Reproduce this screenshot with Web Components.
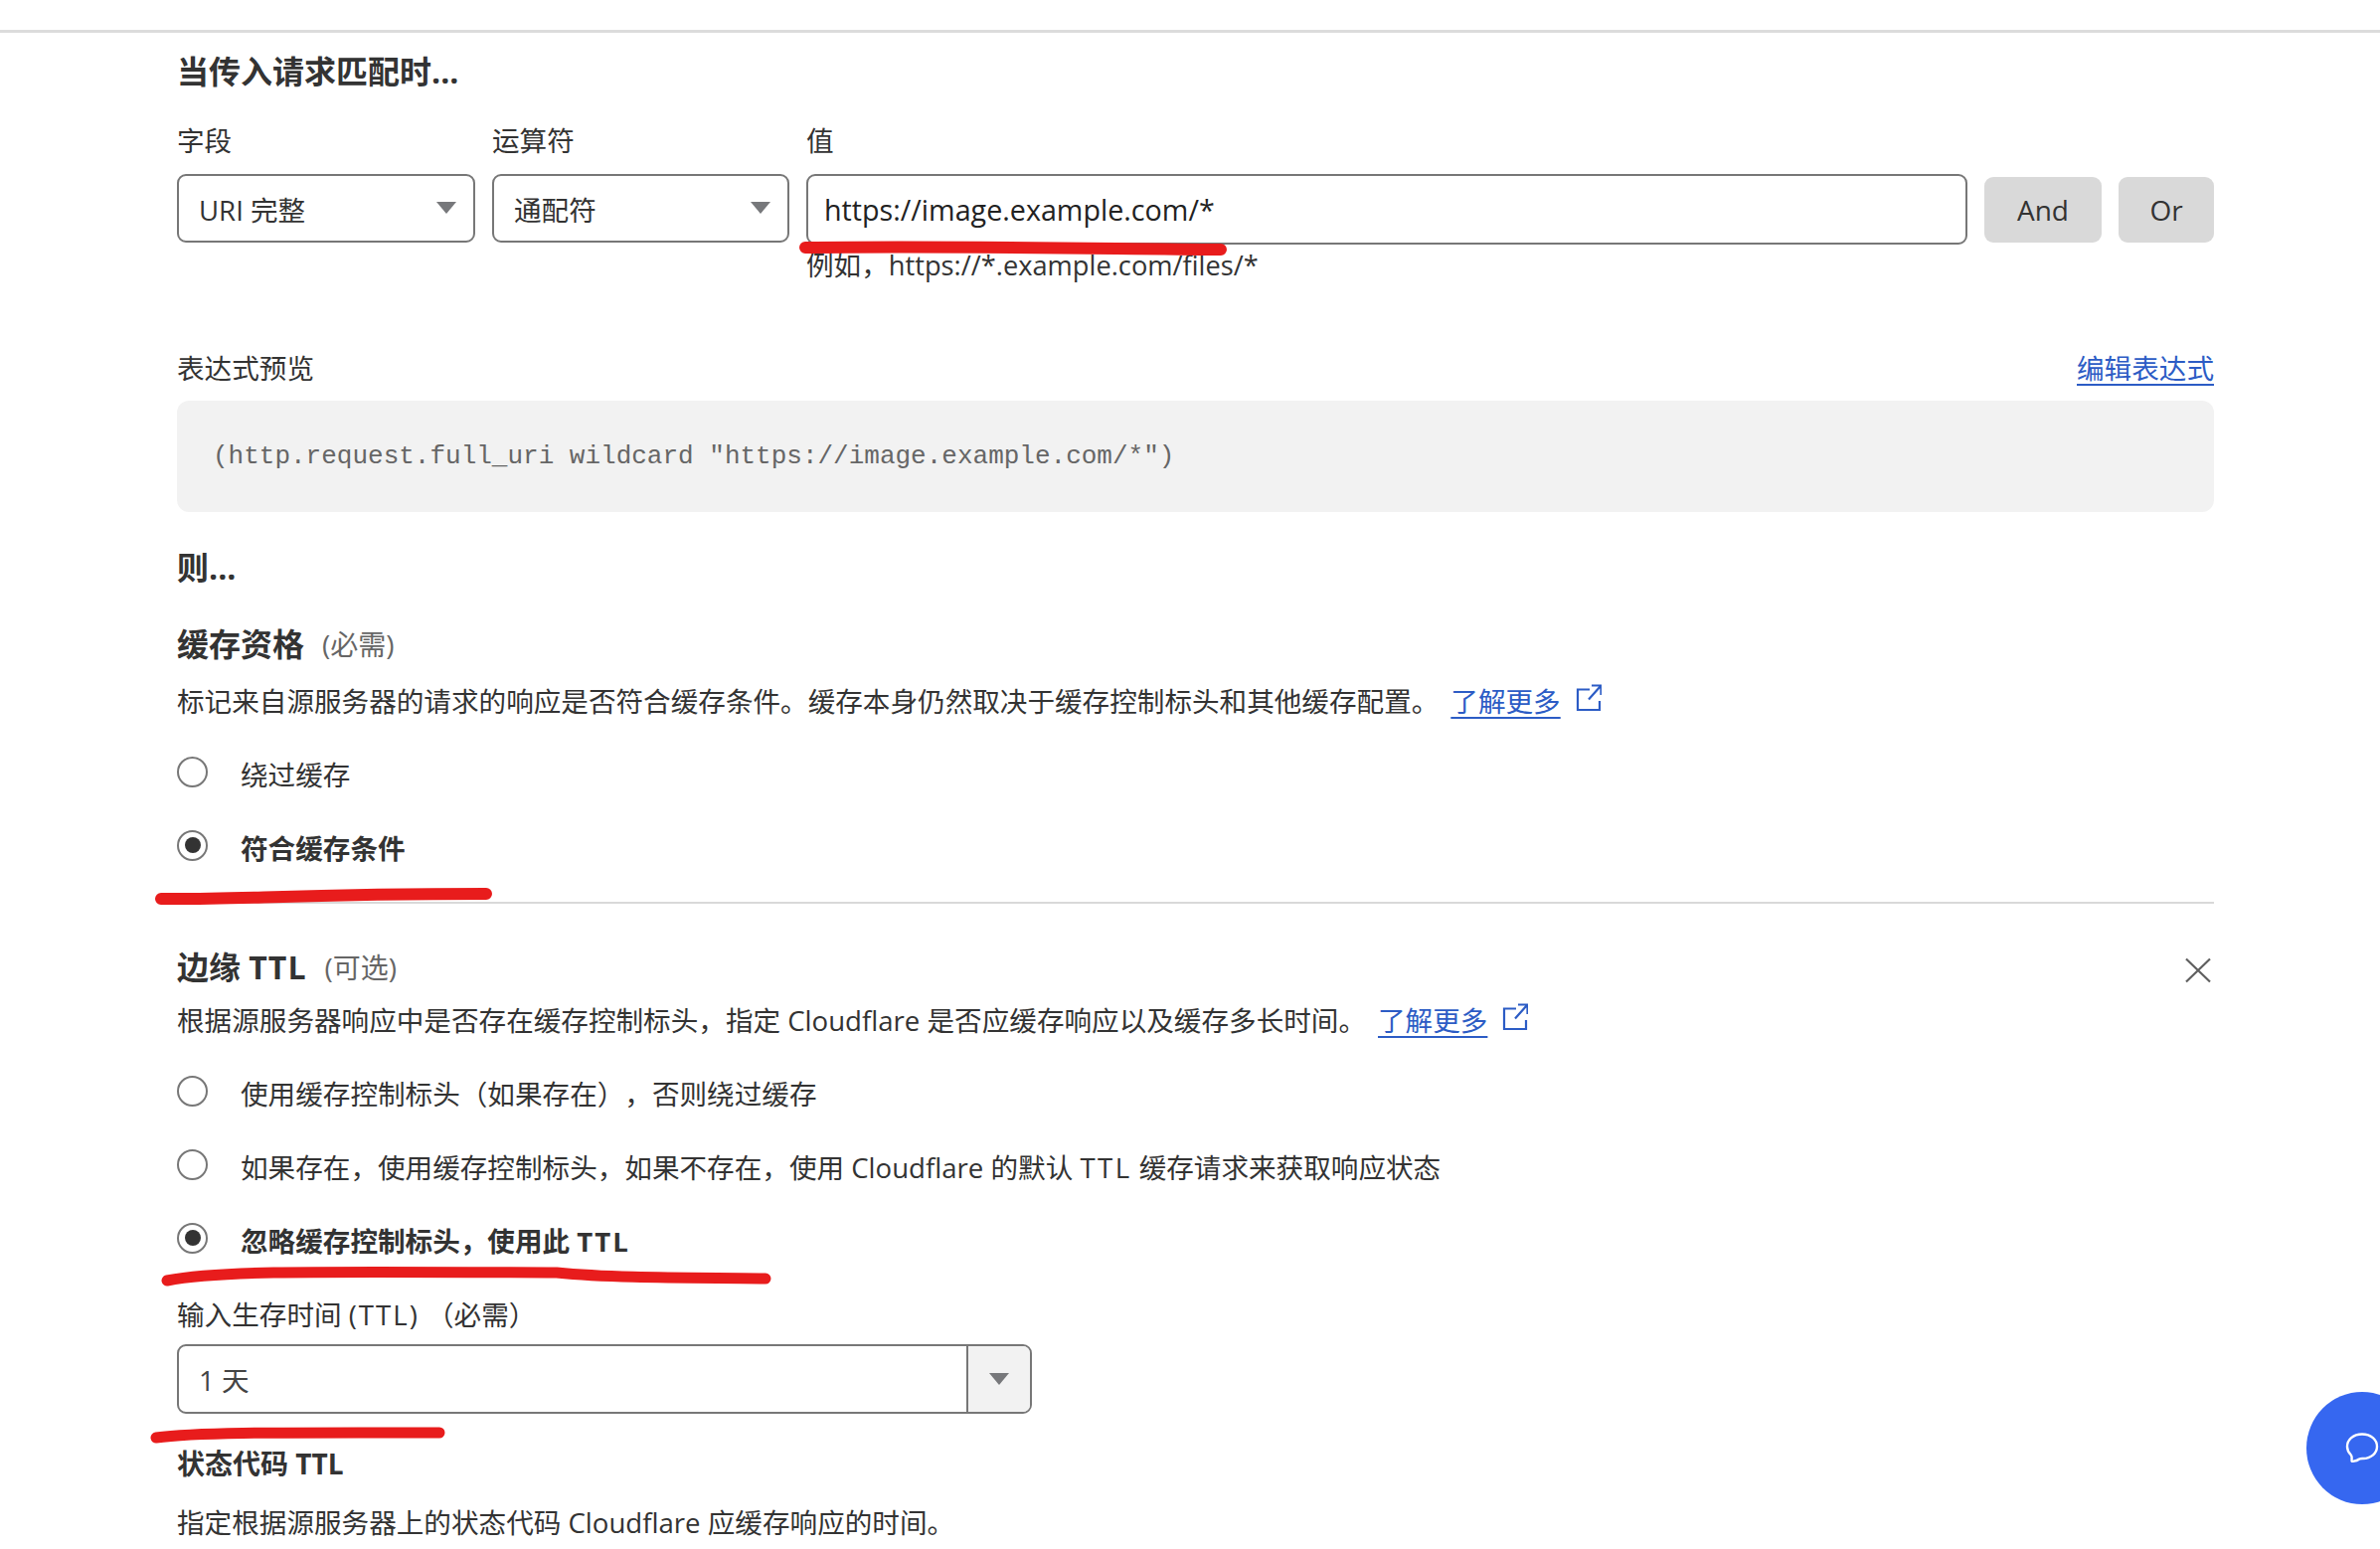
<!DOCTYPE html>
<html lang="zh">
<head>
<meta charset="utf-8">
<title>缓存规则</title>
<style>
    html, body { margin: 0; height: 1558px; overflow: hidden; background: #fff; }
    body { font-family: "Open Sans", "Noto Sans CJK SC", sans-serif; font-size: 27.6px; color: #333; text-spacing-trim: space-all; }
</style>
</head>
<body>
<rule-page>
    <section-title level="1" style="margin-top:17px">当传入请求匹配时...</section-title>

    <match-row style="margin-top:27px"></match-row>

    <expression-preview style="margin-top:65px" link="编辑表达式">(http.request.full_uri wildcard "https://image.example.com/*")</expression-preview>

    <section-title level="1" style="margin-top:34px">则...</section-title>

    <section-title style="margin-top:33px" note="(必需)">缓存资格</section-title>
    <help-text style="margin-top:15px" link="了解更多">标记来自源服务器的请求的响应是否符合缓存条件。缓存本身仍然取决于缓存控制标头和其他缓存配置。</help-text>
    <radio-group style="margin-top:16px">
        <radio-option>绕过缓存</radio-option>
        <radio-option checked>符合缓存条件</radio-option>
    </radio-group>

    <rule-divider style="margin-top:18px"></rule-divider>

    <section-title style="margin-top:42px" note="(可选)" closable>边缘 <span style="letter-spacing:1px">TTL</span></section-title>
    <help-text style="margin-top:11px" link="了解更多">根据源服务器响应中是否存在缓存控制标头，指定 Cloudflare 是否应缓存响应以及缓存多长时间。</help-text>
    <radio-group style="margin-top:16px">
        <radio-option>使用缓存控制标头（如果存在），否则绕过缓存</radio-option>
        <radio-option>如果存在，使用缓存控制标头，如果不存在，使用 Cloudflare 的默认 <span style="letter-spacing:2.400px">TTL</span> 缓存请求来获取响应状态</radio-option>
        <radio-option checked>忽略缓存控制标头，使用此 <span style="letter-spacing:2px">TTL</span></radio-option>
    </radio-group>

    <help-text style="margin-top:18px">输入生存时间 <span style="letter-spacing:2px">(TTL)</span> （必需）</help-text>
    <ttl-combo style="margin-top:10px">1 天</ttl-combo>

    <section-title level="3" style="margin-top:30px">状态代码 TTL</section-title>
    <help-text style="margin-top:19px">指定根据源服务器上的状态代码 Cloudflare 应缓存响应的时间。</help-text>
</rule-page>
<ink-marks></ink-marks>
<chat-fab></chat-fab>

<script>
// small base class, every element just sets its shadow html once
class ShadowEl extends HTMLElement {
    constructor() {
        super();
        this.attachShadow({ mode: 'open' });
    }
    connectedCallback() {
        this.shadowRoot.innerHTML = this.render();
    }
}

const ARROW = `<svg width="20" height="12" viewBox="0 0 20 12"><path d="M0 0h20L10 12z" fill="#77787b"/></svg>`;

class RulePage extends ShadowEl {
    render() {
        return `
            <style>
                :host { display: block; }
                .top { height: 30px; border-bottom: 3px solid #dcdcdc; }
                .body { padding: 0 167px 0 178px; display: flex; flex-direction: column; }
            </style>
            <div class="top"></div>
            <div class="body"><slot></slot></div>
        `;
    }
}

class SectionTitle extends ShadowEl {
    render() {
        const level = this.getAttribute('level');
        const size = level === '3' ? 28 : 32;
        const note = this.getAttribute('note');
        const close = this.hasAttribute('closable') ? `
            <svg class="close" width="26" height="26" viewBox="0 0 26 26">
                <path d="M1 1.500 25 24.500M25 1.500 1 24.500" stroke="#5f5f5f" stroke-width="2.200" fill="none"/>
            </svg>` : '';
        return `
            <style>
                :host { display: flex; align-items: center; line-height: ${level === '3' ? 40 : 44}px; }
                h3 { margin: 0; font-size: ${size}px; font-weight: 700; }
                .note { margin-left: 18px; font-size: 28px; color: #666; }
                .close { margin-left: auto; margin-right: 3px; margin-top: 6px; }
            </style>
            <h3><slot></slot></h3>
            ${note ? `<span class="note">${note}</span>` : ''}
            ${close}
        `;
    }
}

class SelectBox extends ShadowEl {
    render() {
        return `
            <style>
                :host { display: flex; align-items: center; justify-content: space-between; box-sizing: border-box;
                    height: 69px; padding: 0 17px 0 20px; border: 2px solid #777; border-radius: 9px; }
                svg { margin-top: -2px; }
            </style>
            <span><slot></slot></span>
            ${ARROW}
        `;
    }
}

class MatchRow extends ShadowEl {
    render() {
        return `
            <style>
                :host { display: grid; grid-template-columns: 300px 299px 1168px 118px 96px; column-gap: 17px; }
                .label { line-height: 40px; margin-bottom: 14px; }
                .input { box-sizing: border-box; height: 71px; padding: 0 16px; display: flex; align-items: center;
                    border: 2px solid #777; border-radius: 9px; color: #222; font-size: 28.700px; }
                .hint { grid-column: 3; margin-top: 2px; line-height: 36px; }
                .hint span { font-size: 27.260px; }
                .btn { height: 66px; align-self: start; margin-top: 3px; display: flex; align-items: center; justify-content: center;
                    background: #d9d9d9; border-radius: 9px; font-size: 28px; }
            </style>
            <div class="label">字段</div>
            <div class="label">运算符</div>
            <div class="label">值</div>
            <div></div><div></div>
            <select-box>URI 完整</select-box>
            <select-box>通配符</select-box>
            <div class="input">https://image.example.com/*</div>
            <div class="btn">And</div>
            <div class="btn">Or</div>
            <div class="hint">例如，<span>https://*.example.com/files/*</span></div>
        `;
    }
}

class ExpressionPreview extends ShadowEl {
    render() {
        return `
            <style>
                :host { display: block; }
                .head { display: flex; justify-content: space-between; line-height: 40px; margin-bottom: 13px; }
                a { color: #2c5cc5; text-decoration: underline; text-underline-offset: 5px; text-decoration-thickness: 2px; }
                .box { height: 112px; box-sizing: border-box; padding: 0 36px; display: flex; align-items: center;
                    background: #f2f2f2; border-radius: 12px; color: #666;
                    font-family: "Liberation Mono", monospace; font-size: 26px; }
            </style>
            <div class="head"><span>表达式预览</span><a>${this.getAttribute('link')}</a></div>
            <div class="box"><slot></slot></div>
        `;
    }
}

class HelpText extends ShadowEl {
    render() {
        const link = this.getAttribute('link');
        return `
            <style>
                :host { display: block; line-height: 40px; }
                a { margin-left: 12px; color: #2c5cc5; text-decoration: underline; text-underline-offset: 5px; text-decoration-thickness: 2px; }
                svg { margin-left: 15px; vertical-align: 1px; }
            </style>
            <slot></slot>${link ? `<a>${link}</a><svg width="26" height="27" viewBox="0 0 26 27" fill="none" stroke="#2c5cc5" stroke-width="2.200">
                <path d="M14 5.500H2V26H24V17"/>
                <path d="M13 15.500 25 2M16 1.500h9.500V11"/>
            </svg>` : ''}
        `;
    }
}

class RadioGroup extends ShadowEl {
    render() {
        return `<style>:host { display: block; }</style><slot></slot>`;
    }
}

class RadioOption extends ShadowEl {
    render() {
        const on = this.hasAttribute('checked');
        return `
            <style>
                :host { display: flex; align-items: center; height: 74px; font-weight: ${on ? 700 : 400}; }
                .dot { box-sizing: border-box; width: 31px; height: 31px; margin: -4px 33px 0 0; flex: none;
                    border: 2px solid #777; border-radius: 50%; display: flex; align-items: center; justify-content: center; }
                .dot i { width: 16px; height: 16px; border-radius: 50%; background: #333; }
            </style>
            <span class="dot">${on ? '<i></i>' : ''}</span>
            <span><slot></slot></span>
        `;
    }
}

class RuleDivider extends ShadowEl {
    render() {
        return `<style>:host { display: block; height: 2px; background: #d9d9d9; }</style>`;
    }
}

class TtlCombo extends ShadowEl {
    render() {
        return `
            <style>
                :host { display: flex; box-sizing: border-box; width: 860px; height: 70px; border: 2px solid #777; border-radius: 9px; overflow: hidden; }
                .val { flex: 1; padding-left: 20px; display: flex; align-items: center; color: #444; }
                .btn { width: 62px; display: flex; align-items: center; justify-content: center; background: #f2f2f2; border-left: 2px solid #777; }
            </style>
            <div class="val"><slot></slot></div>
            <div class="btn">${ARROW}</div>
        `;
    }
}

// red pen marks somebody drew on top of the screenshot
class InkMarks extends ShadowEl {
    render() {
        return `
            <style>
                :host { position: absolute; left: 0; top: 0; width: 2394px; height: 1558px; pointer-events: none; }
                path { fill: none; stroke: #e81c1c; stroke-linecap: round; }
            </style>
            <svg width="2394" height="1558">
                <path stroke-width="12" d="M810 249C950 247 1100 250 1228 251"/>
                <path stroke-width="12" d="M162 904C240 905 300 899 489 899"/>
                <path stroke-width="11" d="M168 1288C220 1278 300 1279 560 1280C620 1286 700 1285 770 1286"/>
                <path stroke-width="11" d="M157 1446C200 1440 300 1441 442 1441"/>
            </svg>
        `;
    }
}

class ChatFab extends ShadowEl {
    render() {
        return `
            <style>
                :host { position: fixed; left: 2320px; top: 1400px; width: 112px; height: 113px; border-radius: 50%;
                    background: #3667f0; display: flex; align-items: center; justify-content: center; }
            </style>
            <svg width="34" height="32" viewBox="0 0 34 32" fill="none" stroke="#fff" stroke-width="2.400">
                <path d="M17 1.500C8 1.500 2 7 2 14c0 3.500 1.500 6 3.500 8 1 1 1.500 2 1 5.500-.2 1 .3 1.500 1.200 1.400 3-.3 5-1 6.500-2.400 1-.6 2-.5 3.800-.5C25.500 26 32 21 32 14S26 1.500 17 1.500z"/>
            </svg>
        `;
    }
}

customElements.define('rule-page', RulePage);
customElements.define('section-title', SectionTitle);
customElements.define('select-box', SelectBox);
customElements.define('match-row', MatchRow);
customElements.define('expression-preview', ExpressionPreview);
customElements.define('help-text', HelpText);
customElements.define('radio-group', RadioGroup);
customElements.define('radio-option', RadioOption);
customElements.define('rule-divider', RuleDivider);
customElements.define('ttl-combo', TtlCombo);
customElements.define('ink-marks', InkMarks);
customElements.define('chat-fab', ChatFab);
</script>
</body>
</html>
